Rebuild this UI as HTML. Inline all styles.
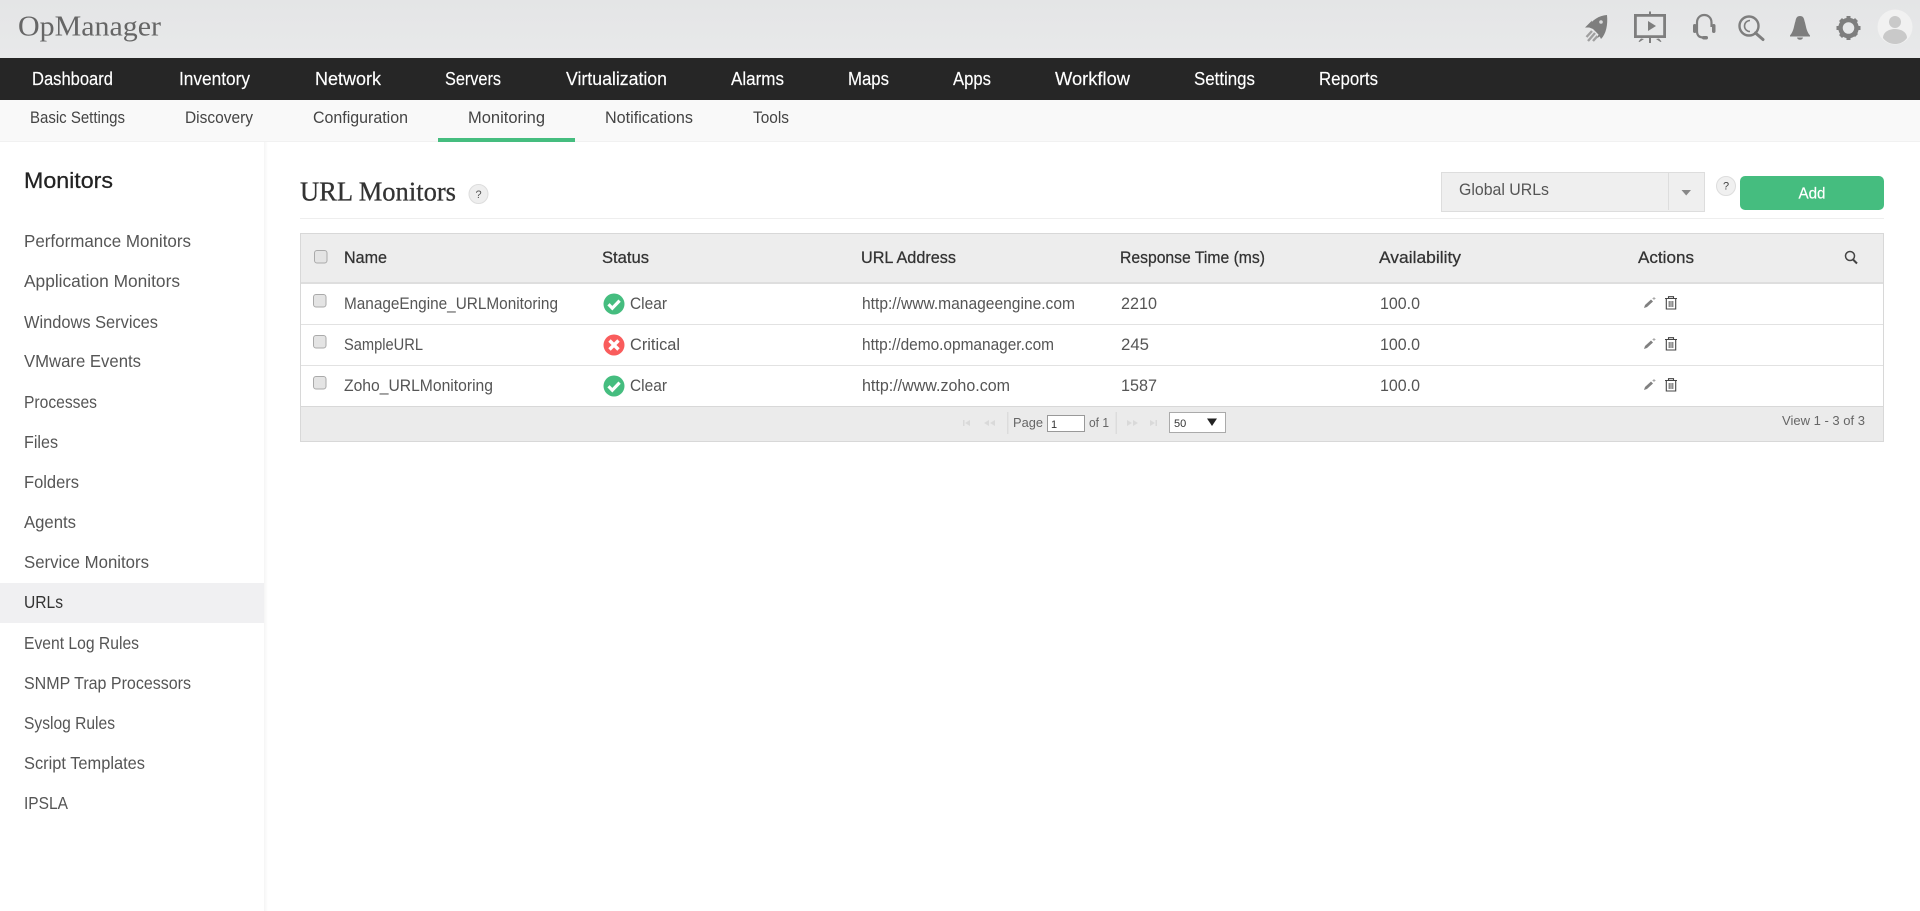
<!DOCTYPE html>
<html lang="en"><head><meta charset="utf-8"><title>OpManager - URL Monitors</title>
<style>
html,body{margin:0;padding:0;background:#fff;width:1920px;height:911px;overflow:hidden}
svg{display:block}
text{font-family:"Liberation Sans",Arial,sans-serif;white-space:pre}
.nav text{font-size:18.5px;fill:#fff;stroke:#fff;stroke-width:.15}
.sub text{font-size:16.5px;fill:#444}
.side text{font-size:17.5px;fill:#555}
.th text{font-size:16.5px;fill:#333;stroke:#333;stroke-width:.25}
.td text{font-size:16.5px;fill:#555}
.ar text{font-size:13px;fill:#666}
.serif{font-family:"Liberation Serif",serif}
</style></head><body>
<svg width="1920" height="911" viewBox="0 0 1920 911" xmlns="http://www.w3.org/2000/svg">
<defs>
<linearGradient id="sh" x1="0" x2="1" y1="0" y2="0"><stop offset="0" stop-color="#f5f5f5"/><stop offset="1" stop-color="#fff"/></linearGradient>
<linearGradient id="hd" x1="0" x2="0" y1="0" y2="1"><stop offset="0" stop-color="#e4e5e6"/><stop offset="1" stop-color="#e8e9ea"/></linearGradient>
<g id="chk"><rect x=".5" y=".5" width="12.5" height="12.5" rx="2.5" fill="#e4e4e4" stroke="#aaa"/></g>
<g id="ok"><circle r="10.5" fill="#45bd7f"/><path d="M-5.5 .3L-1.7 4.2L5.6-3.4" fill="none" stroke="#fff" stroke-width="3.2"/></g>
<g id="bad"><circle r="10.5" fill="#f95c5c"/><path d="M-4.5-4.5L4.5 4.5M4.5-4.5L-4.5 4.5" fill="none" stroke="#fff" stroke-width="3.4"/></g>
<g id="act">
<path d="M0 11L1 8L7 2.500L9 4.500L3 10Z" fill="#808080"/><path d="M10 0v3M8.500 1.500h3" stroke="#999" stroke-width=".8"/>
<g transform="translate(20.500,-1.500)" fill="none" stroke="#444" stroke-width="1.100"><path d="M.5 3h12M4 3V1.200h5V3M1.800 3v10.500h9.400V3"/><path d="M4.700 5.500v6M6.500 5.500v6M8.300 5.500v6" stroke="#666"/></g>
</g>
</defs>

<!-- top header -->
<rect width="1920" height="58" fill="url(#hd)"/>
<text class="serif" x="18" y="35.500" font-size="29" fill="#666" textLength="143" lengthAdjust="spacingAndGlyphs">OpManager</text>

<g fill="#7e7e7e">
<!-- rocket -->
<path d="M1607 15C1599 15.500 1592 20 1588 27L1593 29L1599 35L1601 39C1606 34 1608 25 1607 15Z"/>
<circle cx="1601" cy="22" r="1.800" fill="#d9dadb"/>
<path d="M1585 27.500L1592 20.500L1591 27.500ZM1596.500 38.500L1601 30L1600.500 36Z"/>
<path d="M1592 31L1586.500 37M1595 33L1588 41M1597.500 36L1593 41" stroke="#a0a0a0" stroke-width="2.400" fill="none"/>
<!-- presentation -->
<path fill-rule="evenodd" d="M1634 14H1666V38H1634ZM1636.800 16.800V35.200H1663.200V16.800Z"/>
<rect x="1649" y="11.500" width="2" height="3"/>
<path d="M1648 21L1656 26L1648 31Z"/>
<path d="M1649 38h2v5h-2zM1641 38.500l3 .5-4.500 3-1-.5zM1659 38.500l-3 .5 4.500 3 1-.5z"/>
<!-- headset -->
<path d="M1711.500 27V22.500C1711.500 12.500 1697 12.500 1697 22.500V31C1697 36.500 1700 37.500 1704 37.500" fill="none" stroke="#7e7e7e" stroke-width="2.200"/>
<rect x="1693" y="24" width="3.500" height="9" rx="1.700"/><rect x="1712" y="24" width="3.500" height="9" rx="1.700"/>
<rect x="1702" y="36" width="6" height="3.500" rx="1.700"/>
<!-- search -->
<circle cx="1749" cy="26" r="9.500" fill="none" stroke="#7e7e7e" stroke-width="2.400"/>
<path d="M1750 20.500A5.500 5.500 0 0 0 1750 31.500" fill="none" stroke="#7e7e7e" stroke-width="1.600"/>
<path d="M1755.500 33L1763 39.500" stroke="#7e7e7e" stroke-width="3" stroke-linecap="round"/>
<!-- bell -->
<path d="M1800 16C1803 16 1804 18 1804.500 21C1806 25 1806 31 1810 35.500V36.500H1790V35.500C1794 31 1794 25 1795.500 21C1796 18 1797 16 1800 16Z"/>
<path d="M1797 37.500H1803C1802.500 40.500 1797.500 40.500 1797 37.500Z"/>
<!-- gear -->
<circle cx="1848.500" cy="28" r="8" fill="none" stroke="#7e7e7e" stroke-width="4.500"/>
<path d="M1846.500 16h4v4h-4zM1846.500 36h4v4h-4zM1836.500 26h4v4h-4zM1856.500 26h4v4h-4z"/>
<path d="M1839 21l3-3 3 3-3 3zM1852 34l3-3 3 3-3 3zM1839 35l3-3 3 3-3 3zM1852 21l3-3 3 3-3 3z"/>
</g>
<!-- avatar -->
<circle cx="1895" cy="27" r="17.500" fill="#f1f1f1"/>
<circle cx="1895" cy="22" r="6" fill="#c9c9c9"/>
<path d="M1883 38C1883 26 1907 26 1907 38C1901 46 1889 46 1883 38Z" fill="#c9c9c9"/>

<!-- main nav -->
<rect y="58" width="1920" height="42" fill="#262626"/>
<g class="nav">
<text x="32" y="85" textLength="81" lengthAdjust="spacingAndGlyphs">Dashboard</text>
<text x="179" y="85" textLength="71" lengthAdjust="spacingAndGlyphs">Inventory</text>
<text x="315" y="85" textLength="66" lengthAdjust="spacingAndGlyphs">Network</text>
<text x="445" y="85" textLength="56" lengthAdjust="spacingAndGlyphs">Servers</text>
<text x="566" y="85" textLength="101" lengthAdjust="spacingAndGlyphs">Virtualization</text>
<text x="731" y="85" textLength="53" lengthAdjust="spacingAndGlyphs">Alarms</text>
<text x="848" y="85" textLength="41" lengthAdjust="spacingAndGlyphs">Maps</text>
<text x="953" y="85" textLength="38" lengthAdjust="spacingAndGlyphs">Apps</text>
<text x="1055" y="85" textLength="75" lengthAdjust="spacingAndGlyphs">Workflow</text>
<text x="1194" y="85" textLength="61" lengthAdjust="spacingAndGlyphs">Settings</text>
<text x="1319" y="85" textLength="59" lengthAdjust="spacingAndGlyphs">Reports</text>
</g>

<!-- sub nav -->
<rect y="100" width="1920" height="42" fill="#f9f9f9"/>
<rect y="141" width="1920" height="1" fill="#f1f1f1"/>
<rect x="438" y="138" width="137" height="4" fill="#45bd7f"/>
<g class="sub">
<text x="30" y="123" textLength="95" lengthAdjust="spacingAndGlyphs">Basic Settings</text>
<text x="185" y="123" textLength="68" lengthAdjust="spacingAndGlyphs">Discovery</text>
<text x="313" y="123" textLength="95" lengthAdjust="spacingAndGlyphs">Configuration</text>
<text x="468" y="123" textLength="77" lengthAdjust="spacingAndGlyphs">Monitoring</text>
<text x="605" y="123" textLength="88" lengthAdjust="spacingAndGlyphs">Notifications</text>
<text x="753" y="123" textLength="36" lengthAdjust="spacingAndGlyphs">Tools</text>
</g>

<!-- sidebar -->
<rect x="264" y="142" width="4" height="769" fill="url(#sh)"/>
<rect y="583" width="264" height="40" fill="#f0f0f2"/>
<text x="24" y="188" font-size="22" fill="#222" stroke="#222" stroke-width=".25" textLength="89" lengthAdjust="spacingAndGlyphs">Monitors</text>
<g class="side">
<text x="24" y="247" textLength="167" lengthAdjust="spacingAndGlyphs">Performance Monitors</text>
<text x="24" y="287" textLength="156" lengthAdjust="spacingAndGlyphs">Application Monitors</text>
<text x="24" y="328" textLength="134" lengthAdjust="spacingAndGlyphs">Windows Services</text>
<text x="24" y="367" textLength="117" lengthAdjust="spacingAndGlyphs">VMware Events</text>
<text x="24" y="408" textLength="73" lengthAdjust="spacingAndGlyphs">Processes</text>
<text x="24" y="448" textLength="34" lengthAdjust="spacingAndGlyphs">Files</text>
<text x="24" y="488" textLength="55" lengthAdjust="spacingAndGlyphs">Folders</text>
<text x="24" y="528" textLength="52" lengthAdjust="spacingAndGlyphs">Agents</text>
<text x="24" y="568" textLength="125" lengthAdjust="spacingAndGlyphs">Service Monitors</text>
<text x="24" y="608" textLength="39" lengthAdjust="spacingAndGlyphs" style="fill:#333">URLs</text>
<text x="24" y="649" textLength="115" lengthAdjust="spacingAndGlyphs">Event Log Rules</text>
<text x="24" y="689" textLength="167" lengthAdjust="spacingAndGlyphs">SNMP Trap Processors</text>
<text x="24" y="729" textLength="91" lengthAdjust="spacingAndGlyphs">Syslog Rules</text>
<text x="24" y="769" textLength="121" lengthAdjust="spacingAndGlyphs">Script Templates</text>
<text x="24" y="809" textLength="44" lengthAdjust="spacingAndGlyphs">IPSLA</text>
</g>

<!-- title -->
<text class="serif" x="300" y="200.500" font-size="27" fill="#333" stroke="#333" stroke-width=".3" textLength="156" lengthAdjust="spacingAndGlyphs">URL Monitors</text>
<circle cx="478.500" cy="194" r="9.500" fill="#eee" stroke="#ddd"/>
<text x="478.500" y="198" font-size="11" fill="#555" text-anchor="middle">?</text>
<rect x="300" y="218" width="1584" height="1" fill="#eee"/>

<!-- select -->
<rect x="1441.500" y="172.500" width="263" height="39" fill="#efefef" stroke="#ddd"/>
<rect x="1668" y="173" width="1" height="37" fill="#ddd"/>
<path d="M1681.500 190H1691L1686.200 195.500Z" fill="#888"/>
<text x="1459" y="195" font-size="17" fill="#555" textLength="90" lengthAdjust="spacingAndGlyphs">Global URLs</text>
<circle cx="1726" cy="186" r="9.500" fill="#f0f0f0" stroke="#ddd"/>
<text x="1726" y="189.500" font-size="11" fill="#444" text-anchor="middle">?</text>
<rect x="1740" y="176" width="144" height="34" rx="5" fill="#45bd7f"/>
<text x="1812" y="198.500" font-size="16" fill="#fff" stroke="#fff" stroke-width=".2" text-anchor="middle" textLength="27" lengthAdjust="spacingAndGlyphs">Add</text>

<!-- table -->
<rect x="301" y="234" width="1582" height="49" fill="#ededed"/>
<rect x="301" y="406" width="1582" height="36" fill="#ebebeb"/>
<rect x="300.500" y="233.500" width="1583" height="208" fill="none" stroke="#d8d8d8"/>
<rect x="301" y="282" width="1582" height="2" fill="#dedede"/>
<rect x="301" y="324" width="1582" height="1" fill="#e2e2e2"/>
<rect x="301" y="365" width="1582" height="1" fill="#e2e2e2"/>
<rect x="301" y="406" width="1582" height="1" fill="#d8d8d8"/>

<use href="#chk" x="314" y="250"/>
<g class="th">
<text x="344" y="263" textLength="43" lengthAdjust="spacingAndGlyphs">Name</text>
<text x="602" y="263" textLength="47" lengthAdjust="spacingAndGlyphs">Status</text>
<text x="861" y="263" textLength="95" lengthAdjust="spacingAndGlyphs">URL Address</text>
<text x="1120" y="263" textLength="145" lengthAdjust="spacingAndGlyphs">Response Time (ms)</text>
<text x="1379" y="263" textLength="82" lengthAdjust="spacingAndGlyphs">Availability</text>
<text x="1638" y="263" textLength="56" lengthAdjust="spacingAndGlyphs">Actions</text>
</g>
<circle cx="1850" cy="256" r="4.500" fill="none" stroke="#444" stroke-width="1.500"/>
<path d="M1853 259.500L1857 263.500" stroke="#444" stroke-width="2"/>

<use href="#chk" x="313" y="294"/><use href="#chk" x="313" y="335"/><use href="#chk" x="313" y="376"/>
<use href="#ok" x="614" y="304"/><use href="#bad" x="614" y="345"/><use href="#ok" x="614" y="386"/>
<g class="td">
<text x="344" y="309" textLength="214" lengthAdjust="spacingAndGlyphs">ManageEngine_URLMonitoring</text>
<text x="630" y="309" textLength="37" lengthAdjust="spacingAndGlyphs">Clear</text>
<text x="862" y="309" textLength="213" lengthAdjust="spacingAndGlyphs">http://www.manageengine.com</text>
<text x="1121" y="309" textLength="36" lengthAdjust="spacingAndGlyphs">2210</text>
<text x="1380" y="309" textLength="40" lengthAdjust="spacingAndGlyphs">100.0</text>

<text x="344" y="350" textLength="79" lengthAdjust="spacingAndGlyphs">SampleURL</text>
<text x="630" y="350" textLength="50" lengthAdjust="spacingAndGlyphs">Critical</text>
<text x="862" y="350" textLength="192" lengthAdjust="spacingAndGlyphs">http://demo.opmanager.com</text>
<text x="1121" y="350" textLength="28" lengthAdjust="spacingAndGlyphs">245</text>
<text x="1380" y="350" textLength="40" lengthAdjust="spacingAndGlyphs">100.0</text>

<text x="344" y="391" textLength="149" lengthAdjust="spacingAndGlyphs">Zoho_URLMonitoring</text>
<text x="630" y="391" textLength="37" lengthAdjust="spacingAndGlyphs">Clear</text>
<text x="862" y="391" textLength="148" lengthAdjust="spacingAndGlyphs">http://www.zoho.com</text>
<text x="1121" y="391" textLength="36" lengthAdjust="spacingAndGlyphs">1587</text>
<text x="1380" y="391" textLength="40" lengthAdjust="spacingAndGlyphs">100.0</text>
</g>
<use href="#act" x="1644" y="297"/><use href="#act" x="1644" y="338"/><use href="#act" x="1644" y="379"/>

<!-- pager -->
<g fill="#d9d9d9">
<path d="M963 420h1.500v6H963zM965 423l5-3v6zM984 423l5-3v6zM990 423l5-3v6zM1127 420l5 3-5 3zM1133 420l5 3-5 3zM1150 420l5 3-5 3zM1155.500 420h1.500v6h-1.500z"/>
</g>
<rect x="1007" y="412" width="1.500" height="22" fill="#dcdcdc"/>
<rect x="1115.500" y="412" width="1.500" height="22" fill="#dcdcdc"/>
<g class="ar">
<text x="1013" y="427" textLength="30" lengthAdjust="spacingAndGlyphs">Page</text>
<text x="1089" y="427" textLength="20" lengthAdjust="spacingAndGlyphs">of 1</text>
<text x="1782" y="425" textLength="83" lengthAdjust="spacingAndGlyphs">View 1 - 3 of 3</text>
</g>
<rect x="1047.500" y="415.500" width="37" height="16" fill="#fff" stroke="#999"/>
<text x="1051" y="428" font-size="11" fill="#333">1</text>
<rect x="1169.500" y="412.500" width="56" height="20" fill="#fff" stroke="#aaa"/>
<text x="1174" y="427" font-size="11" fill="#333">50</text>
<path d="M1207 418.500H1217L1212 426Z" fill="#222"/>
</svg>
</body></html>
